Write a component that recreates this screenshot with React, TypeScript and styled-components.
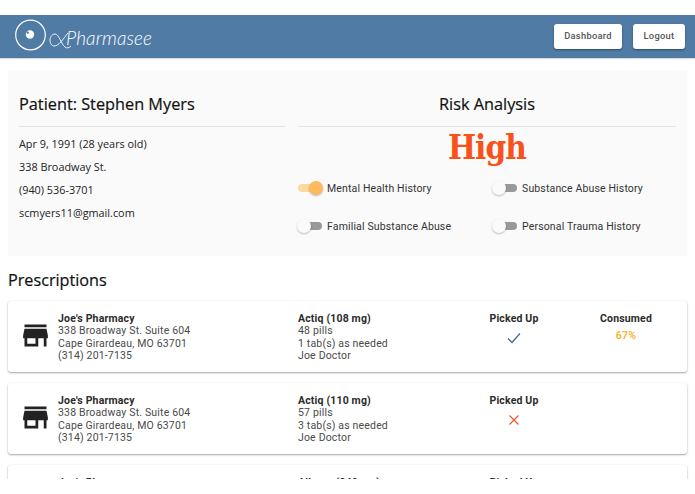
import React from "react";
import styled, { createGlobalStyle } from "styled-components";

const Global = createGlobalStyle`
  html, body { margin: 0; padding: 0; background: #fff; }
  body { font-family: Roboto, "Liberation Sans", sans-serif; }
`;

const Page = styled.div`
  margin-top: 15px;
  height: 464px;
  overflow: hidden;
  background: #fff;
`;

const Header = styled.header`
  height: 43px;
  box-sizing: border-box;
  background: #4f7ba5;
  display: flex;
  align-items: center;
  justify-content: space-between;
  padding: 0 10px 1px 15px;
  box-shadow: 0 1px 1px rgba(0, 0, 0, 0.15);
`;

const Brand = styled.div`
  display: flex;
  align-items: center;
  color: #fff;
`;

const BrandName = styled.span`
  font-family: Lato, sans-serif;
  font-style: italic;
  font-weight: 300;
  font-size: 19px;
  line-height: 30px;
  margin: 3px 0 0 -9px;
  letter-spacing: 0.1px;
`;

const Actions = styled.div`
  display: flex;
  gap: 11px;
`;

const NavButton = styled.button<{ $w: number }>`
  width: ${(p) => p.$w}px;
  height: 25px;
  border: 0;
  padding: 0 0 2px;
  border-radius: 3px;
  background: #fff;
  color: #555;
  font: 500 9.3px Roboto, sans-serif;
  letter-spacing: 0.3px;
  box-shadow: 0 1px 2px rgba(0, 0, 0, 0.4);
`;

const Main = styled.main`
  padding: 12px 8px 0;
`;

const Panel = styled.section`
  height: 186px;
  box-sizing: border-box;
  background: #fafafa;
  padding: 20px 11px 0;
  display: grid;
  grid-template-columns: 266px 378px;
  column-gap: 13px;
`;

const ColumnTitle = styled.h2<{ $center?: boolean }>`
  margin: 0;
  height: 37px;
  box-sizing: border-box;
  border-bottom: 1px solid #e4e4e4;
  font: 500 16.3px/28px "Open Sans", sans-serif;
  -webkit-text-stroke: 0.2px #111;
  color: #111;
  text-align: ${(p) => (p.$center ? "center" : "left")};
`;

const InfoList = styled.div`
  padding-top: 5px;
  display: flex;
  flex-direction: column;
`;

const InfoLine = styled.div`
  font: 400 10.85px/23px "Open Sans", sans-serif;
  color: #222;
`;

const RiskLevel = styled.div`
  font: 700 33px/40px "DejaVu Serif Condensed", "DejaVu Serif", serif;
  letter-spacing: -0.9px;
  color: #f9511a;
  text-align: center;
  margin-top: 1px;
`;

const Toggles = styled.div`
  margin-top: 9px;
  display: grid;
  grid-template-columns: 195px 1fr;
  row-gap: 16px;
`;

const ToggleRow = styled.div`
  display: flex;
  align-items: center;
  height: 22px;
  gap: 5px;
  font: 400 10.5px Roboto, sans-serif;
  letter-spacing: 0.15px;
  color: #333;
`;

const Track = styled.span<{ $on?: boolean }>`
  position: relative;
  display: block;
  width: 24px;
  height: 8px;
  border-radius: 4px;
  background: ${(p) => (p.$on ? "#fcd99f" : "#999")};
`;

const Knob = styled.span<{ $on?: boolean }>`
  position: absolute;
  top: -3px;
  left: ${(p) => (p.$on ? "11px" : "-1px")};
  width: 14px;
  height: 14px;
  border-radius: 50%;
  background: ${(p) => (p.$on ? "#fdbb5c" : "#fafafa")};
  box-shadow: 0 1px 2px rgba(0, 0, 0, 0.25);
`;

const SectionTitle = styled.h2`
  margin: 13px 0 10px;
  font: 500 16.2px/22px "Open Sans", sans-serif;
  -webkit-text-stroke: 0.2px #111;
  color: #111;
`;

const Cards = styled.div`
  display: flex;
  flex-direction: column;
  gap: 11px;
`;

const Card = styled.article`
  height: 71px;
  flex: none;
  box-sizing: border-box;
  background: #fff;
  border-radius: 3px;
  box-shadow: 0 1px 2px rgba(0, 0, 0, 0.35), 0 0 2px rgba(0, 0, 0, 0.05);
  padding: 12px 0 0 11px;
  display: grid;
  grid-template-columns: 39px 240px 160px 112px 112px;
  font: 400 10.5px/12.25px Roboto, sans-serif;
  letter-spacing: 0.17px;
  color: #4a4a4a;
`;

const StoreCell = styled.div`
  padding-top: 6px;
`;

const Strong = styled.div`
  font-weight: 700;
  color: #2b2b2b;
`;

const StatusCell = styled.div`
  text-align: center;
`;

const Percent = styled.div`
  margin-top: 5px;
  font-weight: 700;
  color: #fbb43c;
`;

const IconSlot = styled.div`
  display: flex;
  justify-content: center;
  margin-top: 7px;
`;

const Logo = () => (
  <svg width="60" height="34" viewBox="0 0 60 34" fill="none" stroke="#fff">
    <circle cx="15.5" cy="16" r="14.8" strokeWidth="1.2" />
    <circle cx="15" cy="15.5" r="4.2" fill="#fff" stroke="none" />
    <circle cx="12.8" cy="13.6" r="1.2" fill="#4f7ba5" stroke="none" />
    <path
      d="M53 14C48 20 44 27 39 27 36.5 27 35 24 35 21 35 17.5 37.5 15 40 15 44 15 46 25 50 28 52 29.5 54 29 56 27"
      strokeWidth="0.9"
    />
  </svg>
);

const Store = () => (
  <svg width="33" height="33" viewBox="0 0 24 24" fill="#222">
    <path d="M20 4H4v2h16V4zm1 10v-2l-1-5H4l-1 5v2h1v6h10v-6h4v6h2v-6h1zm-9 4H6v-4h6v4z" />
  </svg>
);

const Check = () => (
  <svg width="14" height="12" viewBox="0 0 14 12" fill="none" stroke="#3d6f99" strokeWidth="1.3">
    <path d="M1 6.5L5 10.5l8-9" />
  </svg>
);

const Cross = () => (
  <svg width="12" height="12" viewBox="0 0 12 12" fill="none" stroke="#e8572a" strokeWidth="1.2">
    <path d="M1.5 1.5l9 9M10.5 1.5l-9 9" />
  </svg>
);

const toggles = [
  { label: "Mental Health History", on: true },
  { label: "Substance Abuse History" },
  { label: "Familial Substance Abuse" },
  { label: "Personal Trauma History" },
];

const prescriptions = [
  { drug: "Actiq (108 mg)", pills: "48 pills", dose: "1 tab(s) as needed", picked: true, consumed: "67%" },
  { drug: "Actiq (110 mg)", pills: "57 pills", dose: "3 tab(s) as needed", picked: false },
  { drug: "Allegra (240 mg)", pills: "30 pills", dose: "1 tab(s) as needed", picked: true },
];

export default function App() {
  return (
    <Page>
      <Global />
      <Header>
        <Brand>
          <Logo />
          <BrandName>Pharmasee</BrandName>
        </Brand>
        <Actions>
          <NavButton $w={68}>Dashboard</NavButton>
          <NavButton $w={52}>Logout</NavButton>
        </Actions>
      </Header>
      <Main>
        <Panel>
          <div>
            <ColumnTitle>Patient: Stephen Myers</ColumnTitle>
            <InfoList>
              <InfoLine>Apr 9, 1991 (28 years old)</InfoLine>
              <InfoLine>338 Broadway St.</InfoLine>
              <InfoLine>(940) 536-3701</InfoLine>
              <InfoLine>scmyers11@gmail.com</InfoLine>
            </InfoList>
          </div>
          <div>
            <ColumnTitle $center>Risk Analysis</ColumnTitle>
            <RiskLevel>High</RiskLevel>
            <Toggles>
              {toggles.map((t) => (
                <ToggleRow key={t.label}>
                  <Track $on={t.on}>
                    <Knob $on={t.on} />
                  </Track>
                  {t.label}
                </ToggleRow>
              ))}
            </Toggles>
          </div>
        </Panel>
        <SectionTitle>Prescriptions</SectionTitle>
        <Cards>
          {prescriptions.map((p) => (
            <Card key={p.drug}>
              <StoreCell>
                <Store />
              </StoreCell>
              <div>
                <Strong>Joe's Pharmacy</Strong>
                <div>338 Broadway St. Suite 604</div>
                <div>Cape Girardeau, MO 63701</div>
                <div>(314) 201-7135</div>
              </div>
              <div>
                <Strong>{p.drug}</Strong>
                <div>{p.pills}</div>
                <div>{p.dose}</div>
                <div>Joe Doctor</div>
              </div>
              <StatusCell>
                <Strong>Picked Up</Strong>
                <IconSlot>{p.picked ? <Check /> : <Cross />}</IconSlot>
              </StatusCell>
              {p.consumed && (
                <StatusCell>
                  <Strong>Consumed</Strong>
                  <Percent>{p.consumed}</Percent>
                </StatusCell>
              )}
            </Card>
          ))}
        </Cards>
      </Main>
    </Page>
  );
}
